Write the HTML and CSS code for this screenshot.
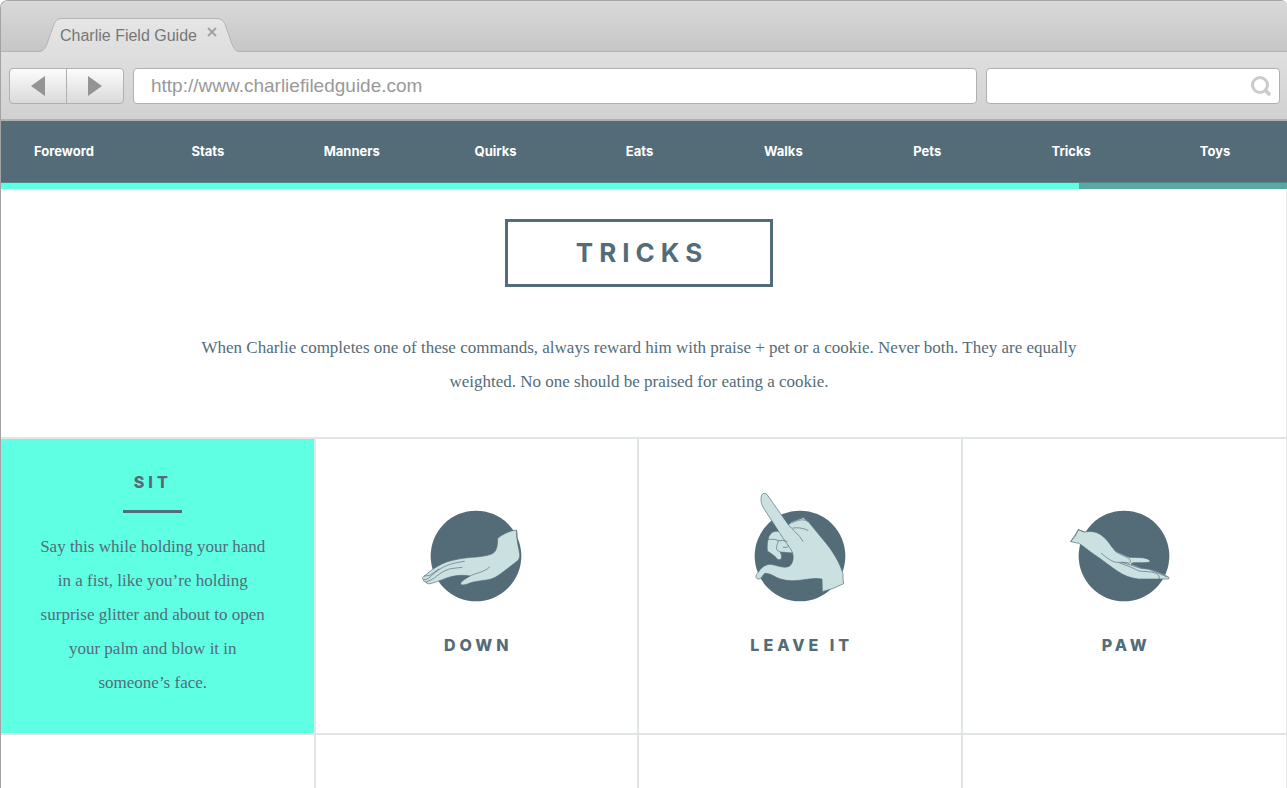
FILE: index.html
```html
<!DOCTYPE html>
<html lang="en">
<head>
<meta charset="utf-8">
<meta name="viewport" content="width=device-width, initial-scale=1">
<title>Charlie Field Guide</title>
<link rel="stylesheet" href="styles.css">
</head>
<body>
<div class="window">
  <header class="chrome">
    <div class="tab-strip">
      <div class="tab">
        <svg class="tab-shape" viewBox="0 0 202 35" preserveAspectRatio="none" aria-hidden="true">
          <defs><linearGradient id="tabfill" x1="0" y1="0" x2="0" y2="1"><stop offset="0" stop-color="#e6e6e6"/><stop offset="1" stop-color="#dedede"/></linearGradient></defs>
          <path d="M0 35V34C5 34 7 31 9 26L15 9C17 3 19 .5 25 .5H178C184 .5 186 3 188 9L194 26C196 31 198 34 202 34V35Z" fill="url(#tabfill)"/>
          <path d="M0 33.5C5 33.5 7 31 9 26L15 9C17 3 19 .5 25 .5H178C184 .5 186 3 188 9L194 26C196 31 198 33.500 202 33.500" fill="none" stroke="#b4b4b4"/>
        </svg>
        <span class="tab-title">Charlie Field Guide</span>
        <button class="tab-close" type="button" aria-label="Close tab">
          <svg viewBox="0 0 10 10" width="10" height="10" aria-hidden="true"><path d="M1 1L9 9M9 1L1 9" stroke="#a3a3a3" stroke-width="2"/></svg>
        </button>
      </div>
    </div>
    <div class="toolbar">
      <div class="history">
        <button type="button" aria-label="Back"><svg viewBox="0 0 14 20" width="14" height="20" aria-hidden="true"><path d="M14 0V20L0 10Z" fill="#949494"/></svg></button>
        <button type="button" aria-label="Forward"><svg viewBox="0 0 14 20" width="14" height="20" aria-hidden="true"><path d="M0 0V20L14 10Z" fill="#949494"/></svg></button>
      </div>
      <input class="field address" type="text" aria-label="Address" value="http://www.charliefiledguide.com">
      <div class="search">
        <input class="field" type="search" aria-label="Search">
        <svg class="search-icon" viewBox="0 0 20 20" width="20" height="20" aria-hidden="true"><circle cx="9" cy="9" r="7.500" fill="none" stroke="#cbcbcb" stroke-width="3"/><path d="M14.500 14.500L18 18" stroke="#cbcbcb" stroke-width="3.500" stroke-linecap="round"/></svg>
      </div>
    </div>
  </header>
  <nav class="site-nav">
    <ul class="nav-list">
      <li><a href="#foreword">Foreword</a></li>
      <li><a href="#stats">Stats</a></li>
      <li><a href="#manners">Manners</a></li>
      <li><a href="#quirks">Quirks</a></li>
      <li><a href="#eats">Eats</a></li>
      <li><a href="#walks">Walks</a></li>
      <li><a href="#pets">Pets</a></li>
      <li><a href="#tricks">Tricks</a></li>
      <li><a href="#toys">Toys</a></li>
    </ul>
    <div class="progress"><div class="progress-bar" style="width:83.800%"></div></div>
  </nav>
  <main class="page" id="tricks">
    <section class="intro">
      <h1 class="title">Tricks</h1>
      <p class="lead">When Charlie completes one of these commands, always reward him with praise + pet or a cookie. Never both. They are equally weighted. No one should be praised for eating a cookie.</p>
    </section>
    <section class="tricks">
      <article class="card card-open">
        <h2 class="card-title">Sit</h2>
        <p class="card-text">Say this while holding your hand in a fist, like you’re holding surprise glitter and about to open your palm and blow it in someone’s face.</p>
      </article>
      <article class="card">
        <svg class="hand" viewBox="7 0 390 390" aria-hidden="true">
          <circle class="disc" cx="202" cy="228" r="136"/>
          <path class="skin" d="M267 175C281 163 300 153 323 150C326 160 326 167 325 174C326 191 330 201 333 222C334 232 331 239 325 244L283 276C266 289 253 297 239 299C214 303 198 304 184 309C171 315 159 317 156 312C154 307 161 304 166 299L184 288C151 282 123 290 101 299C81 306 65 313 57 311Q51 309 53 306C46 306 44 303 45 299C39 297 40 292 47 288L64 274C80 262 96 252 116 245C142 238 163 234 188 232C211 231 232 228 246 223C262 219 267 202 267 175Z"/>
          <path class="crease" d="M45 299C54 300 58 296 65 290C75 281 85 272 101 263C117 254 135 249 167 244M53 306C63 302 73 297 82 290C98 277 111 270 126 266L160 262M47 288L63 286L91 267M184 288C200 279 225 278 243 261M323 151L324 173"/>
        </svg>
        <h2 class="card-title">Down</h2>
      </article>
      <article class="card">
        <svg class="hand" viewBox="2 0 390 390" aria-hidden="true">
          <circle class="disc" cx="197" cy="228" r="136"/>
          <path class="skin" d="M133 154Q112 151 104 169C98 184 98 198 99 213Q112 221 124 231C127 238 135 242 140 237C144 232 141 224 138 216L174 219L180 190L155 156Z"/>
          <path class="skin" d="M99 45C95 38 83 38 81 48C78 64 82 76 90 88L126 143C140 166 155 188 169 207C180 223 179 247 166 258C148 267 131 256 109 253C91 253 79 265 71 278C62 286 63 298 74 297C83 295 83 286 92 280C103 280 113 285 124 291C147 303 174 304 203 300C224 297 244 293 263 297L264 335Q298 327 328 311Q325 295 326 283C318 251 299 220 277 192L221 124L207 112L171 125L162 134Z"/>
          <path class="crease" d="M162 134C172 148 194 162 206 184M165 126L207 113L220 125M166 131C184 123 201 116 213 121M176 144C190 142 202 144 217 149Q221 150 221 152M95 178L122 178L132 182L130 190C126 200 125 207 129 211L138 216M132 182Q146 179 158 184M147 202Q157 206 163 198"/>
        </svg>
        <h2 class="card-title">Leave it</h2>
      </article>
      <article class="card">
        <svg class="hand" viewBox="-1 0 390 390" aria-hidden="true">
          <circle class="disc" cx="194" cy="228" r="136"/>
          <path class="skin" d="M57 149L75 156C92 153 109 154 124 164C139 174 149 188 158 201L170 214C185 221 197 227 210 232L246 233C262 234 274 240 272 245C267 249 246 248 221 248L215 252L244 263L274 268C292 275 314 283 329 292L328 297L237 297C215 295 194 287 175 274C151 258 132 242 108 226C88 213 74 199 58 190L34 185C40 174 49 164 57 149Z"/>
          <path class="crease" d="M57 149Q49 171 34 185M57 149L75 156M126 220C144 235 158 245 171 247L188 247L203 248C212 252 216 246 211 238C204 230 184 226 167 213L151 188L140 174M181 249L216 262L239 273L277 276C297 281 303 288 299 297M188 247L213 255L244 265L274 268M274 270L323 291"/>
        </svg>
        <h2 class="card-title">Paw</h2>
      </article>
      <article class="card"></article>
      <article class="card"></article>
      <article class="card"></article>
      <article class="card"></article>
    </section>
  </main>
</div>
</body>
</html>
```
FILE: styles.css
```css
:root {
  --slate: #546c78;
  --mint: #5fffe4;
  --rule: #e0e5e8;
  --chrome-line: #b2b2b2;
}

* { box-sizing: border-box; }

body {
  margin: 0;
  height: 100vh;
  overflow: hidden;
  background: #fff;
  color: var(--slate);
  font-family: "Liberation Serif", serif;
}

.window {
  height: 100%;
  overflow: hidden;
  border: 1px solid #a3a3a3;
  border-width: 1px 0 0 1px;
  border-radius: 8px 6px 0 0;
}

/* Browser chrome */
.chrome {
  font-family: "Liberation Sans", Arial, sans-serif;
  border-bottom: 2px solid #b3b0ae;
}

.tab-strip {
  display: flex;
  align-items: flex-end;
  height: 51px;
  padding-left: 37px;
  background: linear-gradient(#d9d9d9, #c6c6c6);
  box-shadow: inset 0 -1px var(--chrome-line);
}

.tab {
  position: relative;
  display: flex;
  gap: 10px;
  height: 34px;
  padding: 0 23px 0 22px;
}

.tab-shape {
  position: absolute;
  inset: 0;
  width: 100%;
  height: 35px;
}

.tab-title {
  position: relative;
  font-size: 16px;
  line-height: 36px;
  color: #777;
}

.tab-close {
  position: relative;
  display: flex;
  align-self: flex-start;
  margin-top: 9px;
  padding: 0;
  border: 0;
  background: none;
}

.toolbar {
  display: flex;
  gap: 9px;
  padding: 16px 7px 15px 8px;
  background: linear-gradient(#dfdfdf, #d1d1d1);
}

.history {
  display: flex;
  width: 115px;
  height: 36px;
  border: 1px solid #b0b0b0;
  border-radius: 4px;
  background: linear-gradient(#fcfcfc, #dadada);
}

.history button {
  flex: 1;
  display: flex;
  align-items: center;
  justify-content: center;
  padding: 0;
  border: 0;
  background: none;
}

.history button + button { border-left: 1px solid #b0b0b0; }

.field {
  width: 100%;
  height: 36px;
  padding: 0 17px;
  border: 1px solid #b0b0b0;
  border-radius: 4px;
  background: #fff;
  color: #999;
  font: 19px "Liberation Sans", Arial, sans-serif;
  appearance: none;
}

.address { flex: 1; }

.search {
  position: relative;
  width: 294px;
}

.search-icon {
  position: absolute;
  top: 8px;
  right: 9px;
}

/* Site navigation */
.site-nav { background: var(--slate); }

.nav-list {
  display: grid;
  grid-template-columns: repeat(9, 1fr);
  margin: 0 0 0 -9px;
  padding: 0;
  list-style: none;
}

.nav-list a {
  display: block;
  color: #fff;
  font: 700 13px/61px Inter, sans-serif;
  text-align: center;
  text-decoration: none;
}

.progress {
  height: 7px;
  border-top: 1px solid #4f8585;
  background: #5ba8a2;
}

.progress-bar {
  height: 6px;
  background: var(--mint);
}

/* Page */
.page {
  margin-left: -9px;
  border-right: 1px solid #e8e8e8;
}

.intro {
  display: flex;
  flex-direction: column;
  align-items: center;
  gap: 44px;
  padding: 30px 24px 38px;
}

.title {
  margin: 0;
  padding: 0 62px 0 68px;
  border: 3px solid var(--slate);
  font: 700 26px/62px Inter, sans-serif;
  letter-spacing: 6px;
  text-transform: uppercase;
}

.lead {
  max-width: 900px;
  margin: 0;
  font-size: 17px;
  line-height: 34px;
  text-align: center;
}

.tricks {
  display: grid;
  grid-template-columns: repeat(4, 1fr);
  border-top: 2px solid var(--rule);
}

.card {
  display: flex;
  flex-direction: column;
  align-items: center;
  min-height: 296px;
  padding: 41px 32px 32px;
  border-right: 2px solid var(--rule);
  border-bottom: 2px solid var(--rule);
}

.card:nth-child(4n) { border-right: 0; }

.card-open {
  padding-top: 31px;
  background: var(--mint);
  background-clip: padding-box;
}

.card-title {
  margin: 0;
  padding-left: 4px;
  font: 800 16px/24px Inter, sans-serif;
  letter-spacing: 4px;
  text-align: center;
  text-transform: uppercase;
}

.card-open .card-title { padding-left: 0; }

.card-open .card-title::after {
  content: "";
  display: block;
  width: 59px;
  margin: 16px auto 17px;
  border-top: 3px solid;
}

.card-text {
  max-width: 240px;
  margin: 0;
  font-size: 17px;
  line-height: 34px;
  text-align: center;
}

.hand {
  width: 130px;
  height: 130px;
  margin-bottom: 23px;
}

.disc { fill: var(--slate); }

.skin {
  fill: #cae0e1;
  stroke: var(--slate);
  stroke-width: 2;
  stroke-linejoin: round;
}

.crease {
  fill: none;
  stroke: var(--slate);
  stroke-width: 2;
  stroke-linecap: round;
  stroke-linejoin: round;
}
```
